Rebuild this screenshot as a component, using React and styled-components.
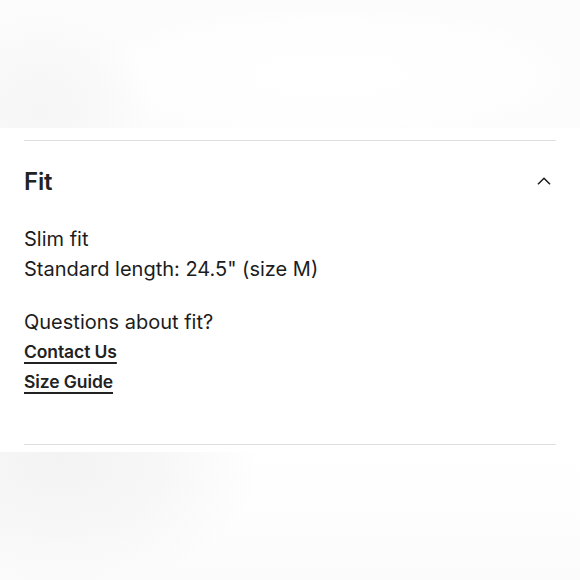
import React from "react";
import styled, { createGlobalStyle } from "styled-components";

const Global = createGlobalStyle`
  html, body { margin: 0; padding: 0; background: #ffffff; }
  body { font-family: Inter, "Noto Sans", Arial, sans-serif; color: #1f1f1f; -webkit-font-smoothing: antialiased; }
  * { box-sizing: border-box; }
`;

const Page = styled.div`
  width: 580px;
  height: 580px;
  display: flex;
  flex-direction: column;
  overflow: hidden;
  background: #ffffff;
`;

const Band = styled.div`
  height: ${(p) => p.$h}px;
  margin-top: ${(p) => p.$mt || 0}px;
  flex: none;
  background: ${(p) => p.$bg};
`;

const Accordion = styled.section`
  margin: 12px 24px 0;
  border-top: 1px solid #dedede;
  border-bottom: 1px solid #dedede;
`;

const Header = styled.button`
  all: unset;
  display: flex;
  width: 100%;
  align-items: center;
  justify-content: space-between;
  height: 80px;
  cursor: pointer;
`;

const Title = styled.h3`
  margin: 0;
  font-size: 24px;
  font-weight: 600;
  color: #222;
  letter-spacing: -0.2px;
`;

const Chevron = styled.svg`
  width: 14px;
  height: 8px;
  margin-right: 5px;
`;

const Body = styled.div`
  padding: 3px 0 47px;
  display: flex;
  flex-direction: column;
  gap: 23px;
`;

const Para = styled.div`
  display: flex;
  flex-direction: column;
  font-size: 20px;
  line-height: 30px;
  color: #1c1c1c;
`;

const Link = styled.a`
  font-size: 17.5px;
  font-weight: 600;
  line-height: 30px;
  letter-spacing: -0.1px;
  color: #222;
  text-decoration: underline;
  text-decoration-thickness: 1.5px;
  text-underline-offset: 4px;
  align-self: flex-start;
`;

export default function App() {
  return (
    <>
      <Global />
      <Page>
        <Band
          $h={128}
          $bg="radial-gradient(ellipse 110px 100px at 40px 110px, #f6f6f6 0%, #f9f9f9 60%, rgba(251,251,251,0) 100%), radial-gradient(ellipse 260px 70px at 330px 75px, #ffffff 0%, #fefefe 70%, rgba(252,252,252,0) 100%), #fcfcfc"
        />
        <Accordion>
          <Header>
            <Title>Fit</Title>
            <Chevron viewBox="0 0 14 8" fill="none">
              <path d="M1 7.2 L7 1.2 L13 7.2" stroke="#1c1c1c" strokeWidth="1.5" />
            </Chevron>
          </Header>
          <Body>
            <Para>
              <span>Slim fit</span>
              <span>Standard length: 24.5" (size M)</span>
            </Para>
            <Para>
              <span>Questions about fit?</span>
              <Link href="#">Contact Us</Link>
              <Link href="#">Size Guide</Link>
            </Para>
          </Body>
        </Accordion>
        <Band
          $h={128}
          $mt={7}
          $bg="radial-gradient(ellipse 200px 130px at 60px 10px, #f3f3f3 0%, #f7f7f7 50%, rgba(252,252,252,0) 100%), linear-gradient(180deg, #ffffff 0%, #fdfdfd 60%, #fbfbfb 100%)"
        />
      </Page>
    </>
  );
}
